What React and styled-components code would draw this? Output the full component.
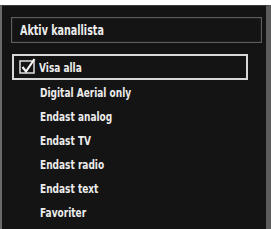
import React from "react";
import styled, { createGlobalStyle } from "styled-components";

const items = [
    "Visa alla",
    "Digital Aerial only",
    "Endast analog",
    "Endast TV",
    "Endast radio",
    "Endast text",
    "Favoriter",
];

const App = () => {
    return (
        <>
            <Global />
            <Panel>
                <Header>
                    <Label size={14} squeeze={0.76}>Aktiv kanallista</Label>
                </Header>
                <List>
                    {items.map((label, i) => (
                        <Row key={label} selected={i === 0}>
                            {i === 0 && (
                                <Check width='18' height='17' viewBox='0 0 18 17'>
                                    <rect x='1' y='4' width='14' height='12' fill='none' stroke='#e0e0e0' strokeWidth='1.5' />
                                    <path d='M3.5 10 L7 14.5 L15.5 2' fill='none' stroke='#f4f4f4' strokeWidth='2.2' />
                                </Check>
                            )}
                            <Label size={13} squeeze={0.77}>{label}</Label>
                        </Row>
                    ))}
                </List>
            </Panel>
        </>
    );
};

const Global = createGlobalStyle`
    body {
        margin: 0;
        background: #ffffff;
    }
`;
const Panel = styled.div`
    margin-top: 5px;
    width: 271px;
    height: 224px;
    box-sizing: border-box;
    background: #141414;
    border-left: 2px solid #6a6a6a;
    border-right: 5px solid #5c5c5c;
    border-top: 1px solid #3a3a3a;
    padding: 11px 4px 0 9px;
    font-family: "DejaVu Sans Condensed", "Liberation Sans", sans-serif;
    color: #ececec;
`;
const Header = styled.div`
    height: 26px;
    box-sizing: border-box;
    border: 1px solid #5e5e5e;
    box-shadow: inset 0 0 2px #3a3a3a;
    display: flex;
    align-items: center;
    padding-left: 8px;
`;
const List = styled.div`
    margin-top: 12px;
    display: flex;
    flex-direction: column;
    width: 236px;
    margin-left: 1px;
`;
const Row = styled.div`
    box-sizing: border-box;
    display: flex;
    align-items: center;
    padding-left: ${(p) => (p.selected ? "5px" : "28px")};
    border: ${(p) => (p.selected ? "2px solid #d8d8d8" : "none")};
    margin-top: ${(p) => (p.selected ? "-1px" : "0")};
    height: ${(p) => (p.selected ? "26px" : "24px")};
`;
const Check = styled.svg`
    flex-shrink: 0;
    margin-right: 2px;
    margin-top: -3px;
`;
const Label = styled.span`
    display: inline-block;
    white-space: nowrap;
    font-size: ${(p) => p.size}px;
    font-weight: bold;
    transform: scaleX(${(p) => p.squeeze});
    transform-origin: left center;
`;

export default App;
